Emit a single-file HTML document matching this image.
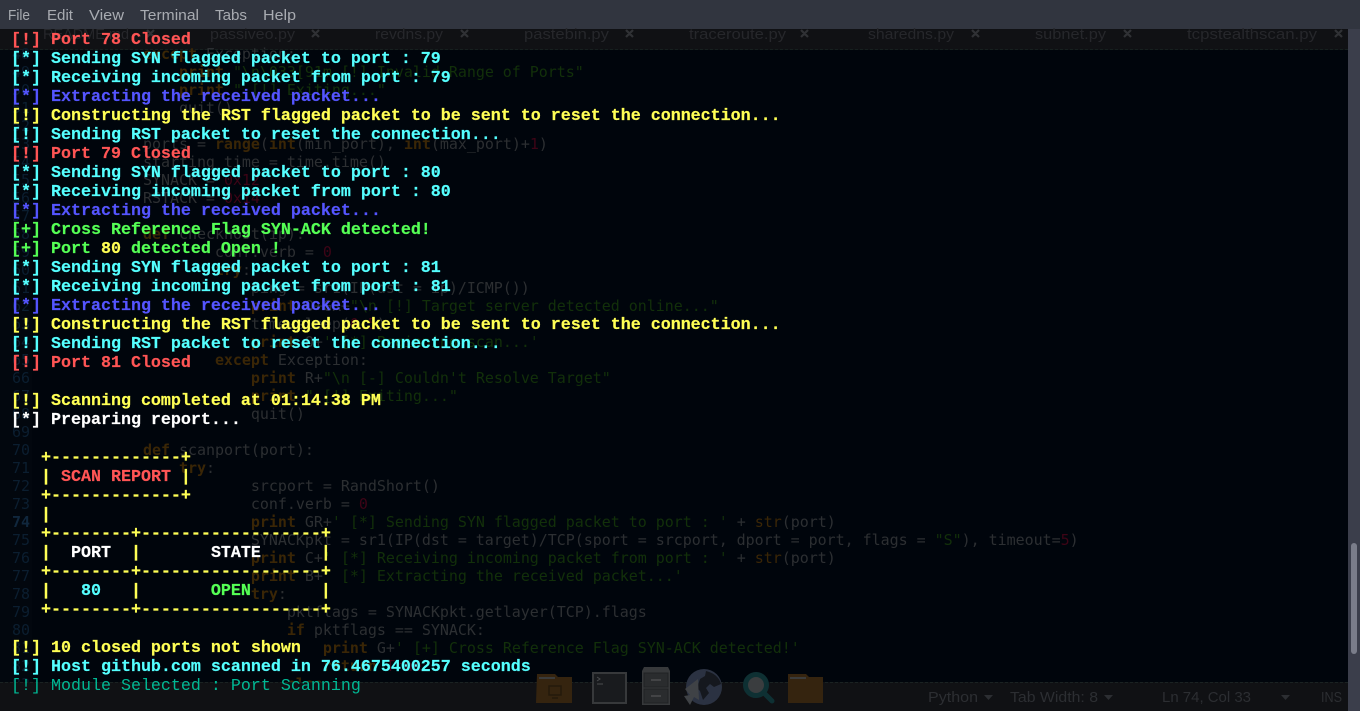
<!DOCTYPE html>
<html><head><meta charset="utf-8"><style>
html,body{margin:0;padding:0;width:1360px;height:711px;overflow:hidden;background:#00050c}
#menu{position:absolute;left:0;top:0;width:1360px;height:29px;background:#31353f}
#tabs{position:absolute;left:0;top:29px;width:1348px;height:20px;background:#101114;border-bottom:1px dashed #16201f}
#gutter{position:absolute;left:0;top:50px;width:32px;height:632px;background:#02070e}
pre{margin:0;position:absolute}
#nums{left:0;width:30px;top:45px;font:15px/18px "DejaVu Sans Mono",monospace;color:#0b1e30;text-align:right;height:637px;overflow:hidden}
#code{left:71px;top:45px;font:15px/18px "DejaVu Sans Mono",monospace;color:#2c2f32;letter-spacing:-.035px}
#code b{font-weight:bold;color:#3a2606}
#code s{text-decoration:none;color:#12300a}
#code i{font-style:normal;color:#3d0416}
#code u{text-decoration:none;font-weight:bold;color:#3a2606}
#status{position:absolute;left:0;top:682px;width:1348px;height:29px;background:#101114;border-top:1px dashed #1a2222;box-sizing:border-box}
#scroll{position:absolute;left:1348px;top:29px;width:12px;height:682px;background:#3b3e4b}
#thumb{position:absolute;left:3px;top:514px;width:6px;height:111px;border-radius:3px;background:#7a7d8a}
#term{left:11px;top:31px;font:bold 16.67px/19px "Liberation Mono",monospace;color:#fff;white-space:pre;-webkit-text-stroke:.2px currentColor}
.r{color:#ff5555}.c{color:#55ffff}.b{color:#5555ff}.y{color:#ffff55}.g{color:#55ff55}.w{color:#fff}
.t{color:#00b894;font-weight:normal;-webkit-text-stroke:0}
svg{position:absolute;left:0;top:0}
</style></head><body>
<div id="menu"></div>
<div id="tabs"></div>
<div id="gutter"></div>
<pre id="nums">48
49
50
51
52
53
54
55
56
57
58
59
60
61
62
63
64
65
66
67
68
69
70
71
72
73
<span style="font-weight:bold;color:#10273d">74</span>
75
76
77
78
79
80
81
82
83</pre>
<pre id="code">        <b>except</b> Exception:
            <u>print</u> <s>"\n\033[91m [!] Invalid Range of Ports"</s>
            <u>print</u> <s>" [!] Exiting..."</s>
            quit()

        ports = <b>range</b>(<b>int</b>(min_port), <b>int</b>(max_port)+<i>1</i>)
        starting_time = time.time()
        SYNACK = <i>0x12</i>
        RSTACK = <i>0x14</i>

        <b>def</b> checkhost(ip):
                conf.verb = <i>0</i>
                <b>try</b>:
                    ping = sr1(IP(dst = ip)/ICMP())
                    <u>print</u> O+GR+<s>"\n [!] Target server detected online..."</s>
                    time.sleep(<i>0.5</i>)
                    <u>print</u> O+<s>' [*] Beginning scan...'</s>
                <b>except</b> Exception:
                    <u>print</u> R+<s>"\n [-] Couldn't Resolve Target"</s>
                    <u>print</u> <s>" [!] Exiting..."</s>
                    quit()

        <b>def</b> scanport(port):
            <b>try</b>:
                    srcport = RandShort()
                    conf.verb = <i>0</i>
                    <u>print</u> GR+<s>' [*] Sending SYN flagged packet to port : '</s> + <b style="font-weight:normal">str</b>(port)
                    SYNACKpkt = sr1(IP(dst = target)/TCP(sport = srcport, dport = port, flags = <s>"S"</s>), timeout=<i>5</i>)
                    <u>print</u> C+<s>' [*] Receiving incoming packet from port : '</s> + <b style="font-weight:normal">str</b>(port)
                    <u>print</u> B+<s>' [*] Extracting the received packet...'</s>
                    <b>try</b>:
                        pktflags = SYNACKpkt.getlayer(TCP).flags
                        <b>if</b> pktflags == SYNACK:
                            <u>print</u> G+<s>' [+] Cross Reference Flag SYN-ACK detected!'</s>
                            <b>return</b> <i>True</i>
                        <b>else</b>:</pre>
<div id="status"></div>
<div id="scroll"><div id="thumb"></div></div>
<svg width="1360" height="711" viewBox="0 0 1360 711" font-family="Liberation Sans, sans-serif">
<g fill="#a8abb1" font-size="15">
<text x="8" y="20" textLength="22" lengthAdjust="spacingAndGlyphs">File</text>
<text x="47" y="20" textLength="26" lengthAdjust="spacingAndGlyphs">Edit</text>
<text x="89" y="20" textLength="35" lengthAdjust="spacingAndGlyphs">View</text>
<text x="140" y="20" textLength="59" lengthAdjust="spacingAndGlyphs">Terminal</text>
<text x="215" y="20" textLength="32" lengthAdjust="spacingAndGlyphs">Tabs</text>
<text x="263" y="20" textLength="33" lengthAdjust="spacingAndGlyphs">Help</text>
</g>
<g fill="#26272b" font-size="15">
<text x="43" y="39" textLength="86" lengthAdjust="spacingAndGlyphs">README.md</text>
<text x="210" y="39" textLength="85" lengthAdjust="spacingAndGlyphs">passiveo.py</text>
<text x="375" y="39" textLength="68" lengthAdjust="spacingAndGlyphs">revdns.py</text>
<text x="524" y="39" textLength="85" lengthAdjust="spacingAndGlyphs">pastebin.py</text>
<text x="689" y="39" textLength="97" lengthAdjust="spacingAndGlyphs">traceroute.py</text>
<text x="868" y="39" textLength="86" lengthAdjust="spacingAndGlyphs">sharedns.py</text>
<text x="1035" y="39" textLength="71" lengthAdjust="spacingAndGlyphs">subnet.py</text>
<text x="1187" y="39" textLength="130" lengthAdjust="spacingAndGlyphs">tcpstealthscan.py</text>
</g>
<g stroke="#303135" stroke-width="2.2" fill="none">
<path d="M147 30l7 7m0-7l-7 7M312 30l7 7m0-7l-7 7M461 30l7 7m0-7l-7 7M626 30l7 7m0-7l-7 7M801 30l7 7m0-7l-7 7M972 30l7 7m0-7l-7 7M1124 30l7 7m0-7l-7 7M1335 30l7 7m0-7l-7 7"/>
</g>
<g fill="#2c2e32" font-size="15">
<text x="928" y="702" textLength="50" lengthAdjust="spacingAndGlyphs">Python</text>
<text x="1010" y="702" textLength="88" lengthAdjust="spacingAndGlyphs">Tab Width: 8</text>
<text x="1162" y="702" textLength="89" lengthAdjust="spacingAndGlyphs">Ln 74, Col 33</text>
<text x="1321" y="702" textLength="21" lengthAdjust="spacingAndGlyphs">INS</text>
</g>
<path d="M984 695h9l-4.500 5zM1104 695h9l-4.500 5zM1281 695h9l-4.500 5z" fill="#2c2e32"/>
<!-- folder 1 -->
<path d="M537 674h18l3 3h14v26h-36z" fill="#35240f"/>
<rect x="539" y="677" width="16" height="2" fill="#3a3b3b"/>
<rect x="549" y="686" width="12" height="9" fill="none" stroke="#241a0b" stroke-width="1.500"/>
<path d="M552 698h6" stroke="#241a0b" stroke-width="1.500"/>
<!-- terminal -->
<rect x="593" y="673" width="33" height="30" fill="#191b1e" stroke="#37393b" stroke-width="2"/>
<path d="M597 677l3 2-3 2M597 684h6" stroke="#4a4c4e" fill="none"/>
<!-- cabinet -->
<path d="M644 667h24l2 4v34h-28v-34z" fill="#37393b"/>
<rect x="644" y="673" width="24" height="14" fill="#2a2c2e" stroke="#202224"/>
<rect x="644" y="689" width="24" height="14" fill="#2a2c2e" stroke="#202224"/>
<path d="M651 680h10M651 696h10" stroke="#434446" stroke-width="2"/>
<!-- globe -->
<circle cx="704" cy="687" r="18" fill="#2b3242"/>
<path d="M706 671c8 2 13 6 15 13l-7 3-4-3-4 4 3 5-6 7-3-9-3-3 3-9 5-3z" fill="#15181e"/>
<path d="M698 679l1 21-5-3-4 8-6-9 6-1-5-6z" fill="#3f4246"/>
<!-- magnifier -->
<circle cx="756" cy="685" r="10.500" fill="#3a3d3f" stroke="#0e3033" stroke-width="5"/>
<path d="M765 694l7 7" stroke="#0e3033" stroke-width="5" stroke-linecap="round"/>
<!-- folder 2 -->
<path d="M788 674h18l3 3h14v26h-35z" fill="#35240f"/>
<rect x="790" y="677" width="16" height="2" fill="#3a3b3b"/>
</svg>
<pre id="term"><span class="r">[!] Port 78 Closed</span>
<span class="c">[*] Sending SYN flagged packet to port : 79</span>
<span class="c">[*] Receiving incoming packet from port : 79</span>
<span class="b">[*] Extracting the received packet...</span>
<span class="y">[!] Constructing the RST flagged packet to be sent to reset the connection...</span>
<span class="c">[!] Sending RST packet to reset the connection...</span>
<span class="r">[!] Port 79 Closed</span>
<span class="c">[*] Sending SYN flagged packet to port : 80</span>
<span class="c">[*] Receiving incoming packet from port : 80</span>
<span class="b">[*] Extracting the received packet...</span>
<span class="g">[+] Cross Reference Flag SYN-ACK detected!</span>
<span class="g">[+] Port <span class="y">80</span> detected Open !</span>
<span class="c">[*] Sending SYN flagged packet to port : 81</span>
<span class="c">[*] Receiving incoming packet from port : 81</span>
<span class="b">[*] Extracting the received packet...</span>
<span class="y">[!] Constructing the RST flagged packet to be sent to reset the connection...</span>
<span class="c">[!] Sending RST packet to reset the connection...</span>
<span class="r">[!] Port 81 Closed</span>

<span class="y">[!] Scanning completed at 01:14:38 PM</span>
<span class="w">[*] Preparing report...</span>

<span class="y">   +-------------+</span>
<span class="y">   | <span class="r">SCAN REPORT</span> |</span>
<span class="y">   +-------------+</span>
<span class="y">   |</span>
<span class="y">   +--------+------------------+</span>
<span class="y">   |  <span class="w">PORT</span>  |       <span class="w">STATE</span>      |</span>
<span class="y">   +--------+------------------+</span>
<span class="y">   |   <span class="c">80</span>   |       <span class="g">OPEN</span>       |</span>
<span class="y">   +--------+------------------+</span>

<span class="y">[!] 10 closed ports not shown</span>
<span class="c">[!] Host github.com scanned in 76.4675400257 seconds</span>
<span class="t">[!] Module Selected : Port Scanning</span></pre>
</body></html>
